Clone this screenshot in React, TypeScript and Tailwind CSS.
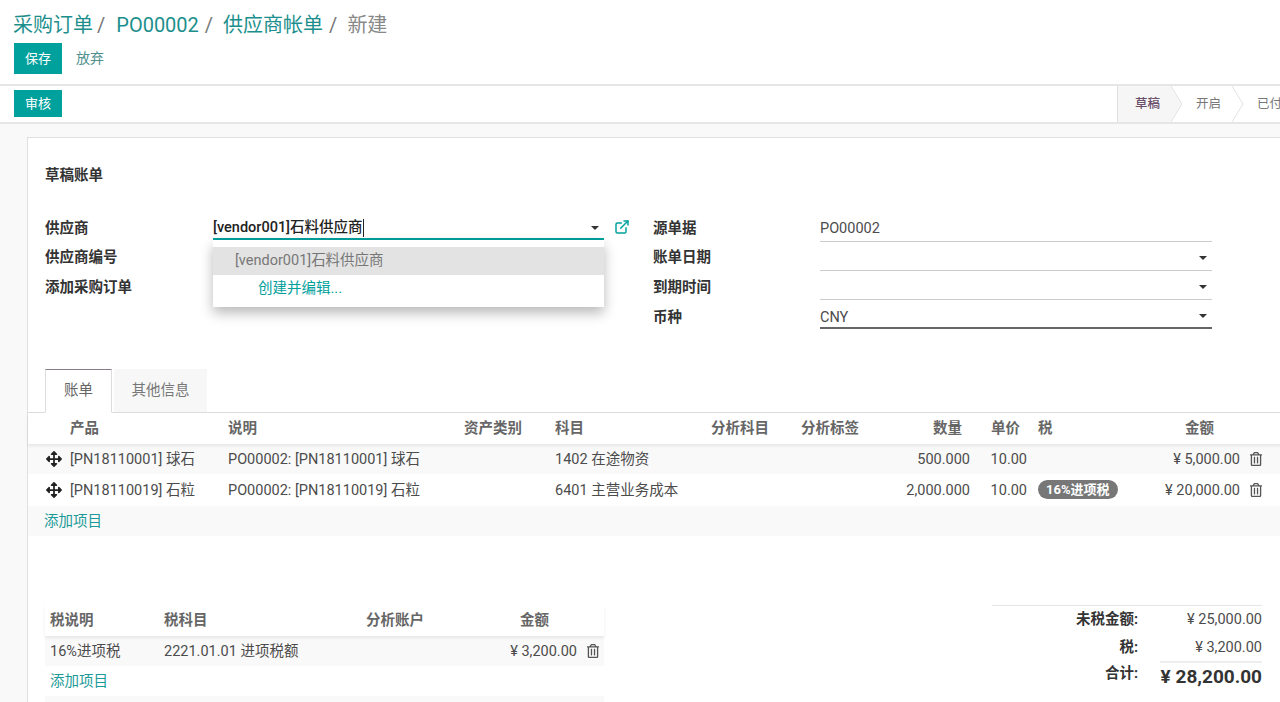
import { ExternalLink } from "lucide-react"
import { FaArrowsAlt, FaRegTrashAlt } from "react-icons/fa"

const lineCols = "grid grid-cols-[42px_158px_236px_91px_156px_90px_89px_80px_57px_123px_90px_40px] items-center"
const taxCols = "grid grid-cols-[114px_202px_130px_81px_27px] items-center pl-[5px]"

const lines = [
  { product: "[PN18110001] 球石", desc: "PO00002: [PN18110001] 球石", account: "1402 在途物资", qty: "500.000", tax: "", amount: "¥ 5,000.00", rowClass: "bg-[#f9f9f9] h-[30px] pt-[2px]" },
  { product: "[PN18110019] 石粒", desc: "PO00002: [PN18110019] 石粒", account: "6401 主营业务成本", qty: "2,000.000", tax: "16%进项税", amount: "¥ 20,000.00", rowClass: "bg-white h-[32px] pt-[2px]" },
]

function Caret() {
  return <span className="border-x-[4px] border-t-[4px] border-x-transparent border-t-[#333] w-0 h-0 mr-[5px] -mt-[1px]" />
}

function Label({ text }: { text: string }) {
  return <div className="font-bold text-[#333]">{text}</div>
}

function SelectField({ value, strong }: { value?: string; strong?: boolean }) {
  return (
    <div className={`w-[392px] flex items-center justify-between h-[24px] ${strong ? "border-b-2 border-[#666]" : "border-b border-[#ccc]"}`}>
      <span className="pt-[3px]">{value}</span>
      <Caret />
    </div>
  )
}

export default function App() {
  return (
    <div className="w-[1280px] h-[702px] overflow-hidden bg-[#f9f9f9] text-[14.5px] text-[#4c4c4c] font-['Roboto','Noto_Sans_CJK_SC',sans-serif]">
      {/* control panel */}
      <div className="h-[86px] bg-white border-b-2 border-[#e6e6e6] pl-[13px]">
        <div className="h-[43px] flex items-center text-[20px] pt-[6px] whitespace-nowrap">
          <span className="text-[#1c8f8d]">采购订单</span>
          <span className="text-[#777] ml-[4px] mr-[11px]">/</span>
          <span className="text-[#1c8f8d]">PO00002</span>
          <span className="text-[#777] ml-[6px] mr-[10px]">/</span>
          <span className="text-[#1c8f8d]">供应商帐单</span>
          <span className="text-[#777] ml-[6px] mr-[10px]">/</span>
          <span className="text-[#888]">新建</span>
        </div>
        <div className="flex items-center pl-[1px]">
          <button className="w-[48px] h-[31px] bg-[#00a09d] text-white text-[13px]">保存</button>
          <button className="ml-[14px] text-[14px] text-[#4f8f8d]">放弃</button>
        </div>
      </div>

      {/* status bar */}
      <div className="h-[38px] bg-white border-b-2 border-[#e6e6e6] pl-[14px] flex items-center justify-between">
        <button className="w-[48px] h-[27px] bg-[#00a09d] text-white text-[13px] mb-[1px]">审核</button>
        <div className="w-[163px] h-full flex overflow-hidden text-[12.5px] text-[#777] whitespace-nowrap">
          <div className="w-[54px] shrink-0 bg-[#f6f6f6] border-l border-[#e0e0e0] flex items-center justify-center pl-[6px] pt-[1px] font-medium text-[#6b4f6b]">草稿</div>
          <svg width="12" height="36" viewBox="0 0 12 36" className="shrink-0 fill-[#f6f6f6] stroke-[#e3e3e3]">
            <path d="M0 0 L11 18 L0 36" />
          </svg>
          <div className="w-[49px] shrink-0 flex items-center justify-center pl-[2px] pt-[1px]">开启</div>
          <svg width="12" height="36" viewBox="0 0 12 36" className="shrink-0 fill-white stroke-[#e3e3e3]">
            <path d="M0 0 L11 18 L0 36" />
          </svg>
          <div className="shrink-0 pl-[13px] pt-[1px] flex items-center">已付款</div>
        </div>
      </div>

      {/* sheet */}
      <div className="mt-[13px] ml-[27px] w-[1300px] h-[600px] bg-white border border-[#e0e0e0]">
        <div className="pl-[17px] pt-[27px] h-[75px] font-bold text-[#333]">草稿账单</div>

        <div className="flex pl-[17px] h-[156px]">
          <div className="w-[168px] flex flex-col">
            <div className="h-[29px] flex items-center pt-[3px]"><Label text="供应商" /></div>
            <div className="h-[30px] flex items-center pt-[2px]"><Label text="供应商编号" /></div>
            <div className="h-[30px] flex items-center pt-[2px]"><Label text="添加采购订单" /></div>
          </div>
          <div className="relative w-[391px] h-[27px]">
            <div className="h-[27px] border-b-2 border-[#00a09d] flex items-center justify-between text-[#222] pt-[5px]">
              <span className="border-r border-[#222] leading-[18px] font-medium">[vendor001]石料供应商</span>
              <Caret />
            </div>
            <ExternalLink className="absolute left-[401px] top-[6px] text-[#00a09d]" size={16} strokeWidth={2.2} />
            {/* autocomplete dropdown */}
            <div className="absolute left-0 top-[27px] w-[391px] h-[67px] bg-white pt-[7px] shadow-[0_6px_12px_rgba(0,0,0,0.28)]">
              <div className="h-[28px] bg-[#e3e3e3] pl-[22px] flex items-center text-[#777]">[vendor001]石料供应商</div>
              <div className="h-[28px] pl-[45px] flex items-center text-[#00a09d]">创建并编辑...</div>
            </div>
          </div>
          <div className="w-[49px]" />
          <div className="w-[167px] flex flex-col">
            <div className="h-[29px] flex items-center pt-[3px]"><Label text="源单据" /></div>
            <div className="h-[30px] flex items-center pt-[2px]"><Label text="账单日期" /></div>
            <div className="h-[30px] flex items-center pt-[2px]"><Label text="到期时间" /></div>
            <div className="h-[30px] flex items-center pt-[2px]"><Label text="币种" /></div>
          </div>
          <div className="flex flex-col w-[392px]">
            <div className="h-[29px] flex items-center border-b border-[#ccc] pt-[3px]">PO00002</div>
            <div className="h-[29px] flex items-end"><SelectField /></div>
            <div className="h-[29px] flex items-end"><SelectField /></div>
            <div className="h-[29px] flex items-end"><SelectField value="CNY" strong /></div>
          </div>
        </div>

        {/* tabs */}
        <div className="h-[44px] border-b border-[#ddd] pl-[17px] flex items-end">
          <div className="w-[67px] h-[44px] -mb-px bg-white border border-b-white border-[#ddd] border-t-[#8a7a8a] flex items-center justify-center text-[#666]">账单</div>
          <div className="ml-[2px] w-[93px] h-[43px] bg-[#f7f7f7] flex items-center justify-center text-[#777]">其他信息</div>
        </div>

        {/* invoice lines */}
        <div className={`${lineCols} h-[31px] font-bold text-[#666] shadow-[0_2px_3px_rgba(0,0,0,0.08)] relative`}>
          <div />
          <div>产品</div>
          <div>说明</div>
          <div>资产类别</div>
          <div>科目</div>
          <div>分析科目</div>
          <div>分析标签</div>
          <div className="text-right pr-[8px]">数量</div>
          <div className="text-right pr-[7px]">单价</div>
          <div className="pl-[11px]">税</div>
          <div className="text-right pr-[26px]">金额</div>
          <div />
        </div>
        {lines.map((line) => (
          <div key={line.product} className={`${lineCols} ${line.rowClass}`}>
            <div className="pl-[18px] -mt-[2px] text-[#222]"><FaArrowsAlt size={16} /></div>
            <div>{line.product}</div>
            <div>{line.desc}</div>
            <div />
            <div>{line.account}</div>
            <div />
            <div />
            <div className="text-right">{line.qty}</div>
            <div className="text-right">10.00</div>
            <div className="pl-[11px] -mt-[2px]">
              {line.tax && (
                <span className="inline-flex items-center h-[19px] px-[8px] rounded-full bg-[#777] text-white text-[13px] font-bold">{line.tax}</span>
              )}
            </div>
            <div className="text-right">{line.amount}</div>
            <div className="pl-[9px] -mt-[2px] text-[#555]"><FaRegTrashAlt size={14} /></div>
          </div>
        ))}
        <div className="h-[30px] bg-[#f9f9f9] pl-[16px] pt-[2px] flex items-center text-[#1c9a97]">添加项目</div>

        {/* tax lines and totals */}
        <div className="flex pl-[17px] pt-[69px]">
          <div className="w-[559px]">
            <div className={`${taxCols} h-[31px] font-bold text-[#666] shadow-[0_2px_3px_rgba(0,0,0,0.08)] relative`}>
              <div>税说明</div>
              <div>税科目</div>
              <div>分析账户</div>
              <div className="text-right pr-[28px]">金额</div>
              <div />
            </div>
            <div className={`${taxCols} h-[30px] pt-[2px] bg-[#f9f9f9]`}>
              <div>16%进项税</div>
              <div>2221.01.01 进项税额</div>
              <div />
              <div className="text-right">¥ 3,200.00</div>
              <div className="pl-[9px] -mt-[2px] text-[#555]"><FaRegTrashAlt size={14} /></div>
            </div>
            <div className="h-[30px] pl-[5px] pt-[2px] flex items-center text-[#1c9a97]">添加项目</div>
            <div className="h-[10px] bg-[#f9f9f9]" />
          </div>
          <div className="ml-[388px] w-[270px] border-t border-[#e6e6e6] text-right">
            <div className="h-[28px] flex items-center">
              <div className="w-[146px] font-bold text-[#333]">未税金额:</div>
              <div className="flex-1">¥ 25,000.00</div>
            </div>
            <div className="h-[27px] flex items-center">
              <div className="w-[146px] font-bold text-[#333]">税:</div>
              <div className="flex-1">¥ 3,200.00</div>
            </div>
            <div className="ml-[168px] border-t-2 border-[#eee]" />
            <div className="flex items-start">
              <div className="w-[146px] font-bold text-[#333]">合计:</div>
              <div className="flex-1 text-[19px] font-bold text-[#333]">¥ 28,200.00</div>
            </div>
          </div>
        </div>
      </div>
    </div>
  )
}
